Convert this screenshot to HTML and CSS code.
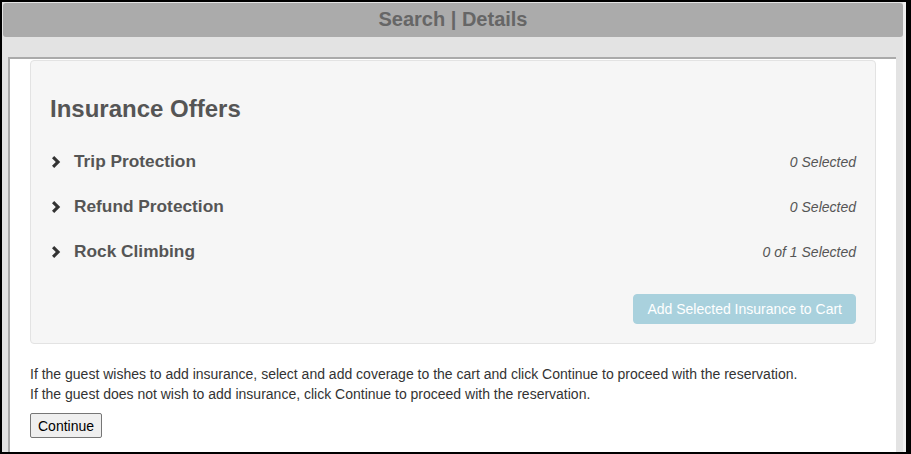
FILE: index.html
```html
<!DOCTYPE html>
<html lang="en">
<head>
<meta charset="utf-8">
<title>Search | Details</title>
<link rel="stylesheet" href="styles.css">
</head>
<body>
<div class="frame">
  <div class="page">
    <div class="titlebar">Search | Details</div>
    <div class="panel">
      <div class="well">
        <h3 class="heading">Insurance Offers</h3>
        <div class="offer">
          <span class="name"><svg class="chev" viewBox="0 0 9 12"><polygon points="0,2.2 2.2,0 8.2,6 2.2,12 0,9.8 3.8,6" fill="#333"/></svg>Trip Protection</span>
          <span class="count">0 Selected</span>
        </div>
        <div class="offer">
          <span class="name"><svg class="chev" viewBox="0 0 9 12"><polygon points="0,2.2 2.2,0 8.2,6 2.2,12 0,9.8 3.8,6" fill="#333"/></svg>Refund Protection</span>
          <span class="count">0 Selected</span>
        </div>
        <div class="offer">
          <span class="name"><svg class="chev" viewBox="0 0 9 12"><polygon points="0,2.2 2.2,0 8.2,6 2.2,12 0,9.8 3.8,6" fill="#333"/></svg>Rock Climbing</span>
          <span class="count">0 of 1 Selected</span>
        </div>
        <div class="actions">
          <button class="add-btn" disabled>Add Selected Insurance to Cart</button>
        </div>
      </div>
      <p class="note">If the guest wishes to add insurance, select and add coverage to the cart and click Continue to proceed with the reservation.<br>If the guest does not wish to add insurance, click Continue to proceed with the reservation.</p>
      <button class="continue">Continue</button>
    </div>
  </div>
</div>
</body>
</html>
```

FILE: styles.css
```css
html, body {
  margin: 0;
  padding: 0;
}
body {
  font-family: "Liberation Sans", Arial, sans-serif;
  font-size: 14px;
  color: #333;
  overflow: hidden;
}
.frame {
  height: 454px;
  box-sizing: border-box;
  border: 2px solid #000;
  border-right-width: 5px;
  background: #e3e3e3;
  display: flex;
  flex-direction: column;
}
.page {
  flex: 1;
  display: flex;
  flex-direction: column;
  border-right: 3px solid #efefef;
  min-height: 0;
}
.titlebar {
  margin: 1px 0 0 1px;
  height: 34px;
  line-height: 32px;
  background: #ababab;
  border-radius: 3px;
  text-align: center;
  font-size: 20px;
  font-weight: bold;
  color: #666;
}
.panel {
  flex: 1;
  margin: 20px 7px 0 6px;
  border-top: 2px solid #aaa;
  border-left: 2px solid #aaa;
  background: #fff;
  padding: 1px 20px 0 20px;
  min-height: 0;
  overflow: hidden;
}
.well {
  background: #f6f6f6;
  border: 1px solid #e3e3e3;
  border-radius: 4px;
  padding: 19px;
  margin-bottom: 20px;
}
.heading {
  margin: 16px 0 17px 0;
  font-size: 24px;
  line-height: 26px;
  font-weight: bold;
  color: #555;
}
.offer {
  display: flex;
  justify-content: space-between;
  align-items: baseline;
}
.name {
  font-size: 17.3px;
  line-height: 45px;
  font-weight: bold;
  color: #555;
}
.chev {
  width: 9px;
  height: 12px;
  margin: 0 13px 0 2px;
  vertical-align: -1px;
}
.count {
  font-size: 14px;
  font-style: italic;
  color: #555;
  line-height: 20px;
}
.actions {
  display: flex;
  justify-content: flex-end;
  margin-top: 20px;
}
.add-btn {
  font-family: "Liberation Sans", Arial, sans-serif;
  font-size: 14px;
  line-height: 20px;
  padding: 4px 13px;
  border: 1px solid #a9d1dd;
  background: #a9d1dd;
  color: #fff;
  border-radius: 4px;
}
.note {
  margin: 0;
  line-height: 20px;
  color: #333;
}
.continue {
  margin-top: 9px;
  font-family: "Liberation Sans", Arial, sans-serif;
  font-size: 14px;
  height: 25px;
  padding: 0 7px;
  background: #efefef;
  border: 1px solid #767676;
  border-radius: 2px;
  color: #000;
}
```
